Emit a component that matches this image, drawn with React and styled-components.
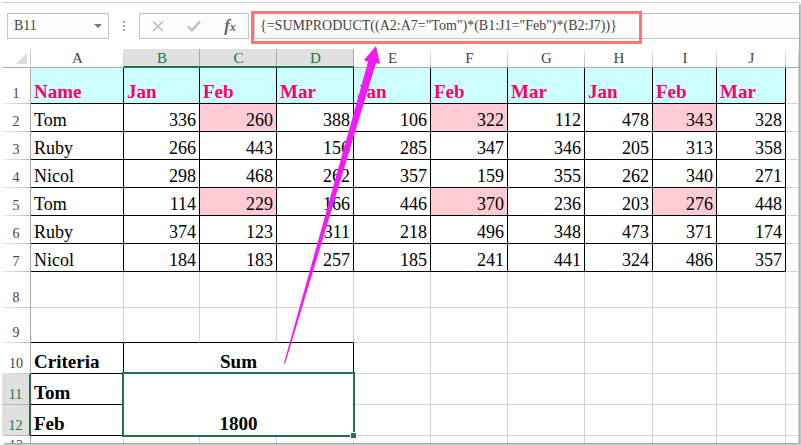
import React from 'react';
import styled, { createGlobalStyle } from 'styled-components';

const GlobalStyle = createGlobalStyle`
  * {
    box-sizing: border-box;
  }

  body {
    margin: 0;
    background-color: white;
    font-family: 'Liberation Serif', 'Times New Roman', serif;
  }
`;

const Page = styled.div`
  height: 100vh;
  padding: 2px;
  display: flex;
  overflow: hidden;
`;

const Window = styled.main`
  position: relative;
  flex: 1;
  min-width: 0;
  display: flex;
  flex-direction: column;
  border-top: 1px solid #d0d0d0;
  background-color: white;
  box-shadow: 2px 2px 2px #a8a8a8;
`;

const FormulaBar = styled.div`
  display: flex;
  padding: 10px 0 10px 5px;
`;

const NameBox = styled.div`
  display: flex;
  width: 102px;
  height: 26px;
  border: 1px solid #c6c6c6;
  background-color: #fdfdfd;
`;

const NameInput = styled.input`
  flex: 1;
  min-width: 0;
  padding: 0 6px;
  border: none;
  outline: none;
  background: transparent;
  color: #444;
  font-family: inherit;
  font-size: 14px;
`;

const IconButton = styled.button`
  display: flex;
  align-items: center;
  justify-content: center;
  flex: ${props => props.$narrow ? '0 0 20px' : '1'};
  padding: 0;
  border: none;
  background: transparent;
  color: #666;
  font-family: inherit;
  cursor: pointer;
`;

const Divider = styled.div`
  width: 30px;
  display: flex;
  flex-direction: column;
  align-items: center;
  justify-content: center;
  gap: 2px;
`;

const Dot = styled.span`
  width: 2px;
  height: 2px;
  background-color: #a0a0a0;
`;

const Actions = styled.div`
  display: flex;
  width: 110px;
  height: 26px;
  margin-right: 5px;
  border: 1px solid #c6c6c6;
  background-color: #fdfdfd;
`;

const FormulaBox = styled.div`
  position: relative;
  flex: 1;
  display: flex;
  border: 1px solid #c6c6c6;
  border-right: none;
  background-color: #fdfdfd;
`;

const FormulaInput = styled.input`
  flex: 1;
  min-width: 0;
  padding: 0 5px;
  border: none;
  outline: none;
  background: transparent;
  color: #444;
  font-family: inherit;
  font-size: 14px;
`;

const Highlight = styled.div`
  position: absolute;
  top: -3px;
  left: -4px;
  width: 391px;
  height: 33px;
  border: 3px solid #fb7575;
  pointer-events: none;
`;

const Sheet = styled.div`
  flex: 1;
  min-height: 0;
  overflow: hidden;
`;

const Grid = styled.table`
  width: 100%;
  table-layout: fixed;
  border-collapse: separate;
  border-spacing: 0;
`;

const Col = styled.col`
  width: ${props => props.$width ? `${props.$width}px` : 'auto'};
`;

const Row = styled.tr`
  height: ${props => props.$height}px;
`;

const Corner = styled.td`
  padding: 0 3px 3px 0;
  border-bottom: 1px solid #ababab;
  border-right: 1px solid #d0d0d0;
  vertical-align: bottom;

  svg {
    display: block;
    margin-left: auto;
  }
`;

const ColumnHead = styled.th`
  padding: 1px 0 0;
  border-bottom: 1px solid ${props => props.$selected ? '#217346' : '#ababab'};
  box-shadow: ${props => props.$selected ? 'inset 0 -1px 0 #217346' : 'none'};
  background: linear-gradient(${props => props.$selected ? '#ababab, #ababab' : '#eee, #bbb'})
    right / 1px 100% no-repeat ${props => props.$selected ? '#e0e0e0' : 'white'};
  color: ${props => props.$selected ? '#217346' : '#444'};
  font-size: 15px;
  font-weight: normal;
  line-height: 17px;
`;

const RowHead = styled.th`
  padding: 0 0 1px;
  border-right: ${props => props.$selected ? '2px solid #217346' : '1px solid #ababab'};
  background: linear-gradient(to right, ${props => props.$selected ? '#c6c6c6, #ababab' : '#eee, #bbb'})
    bottom / 100% 1px no-repeat ${props => props.$selected ? '#e0e0e0' : 'white'};
  color: ${props => props.$selected ? '#217346' : '#444'};
  font-size: 14px;
  font-weight: normal;
  line-height: 18px;
  vertical-align: bottom;
`;

const Cell = styled.td`
  padding: 0 3px 1px;
  border-right: 1px solid ${props => props.$boxed ? 'black' : '#d4d4d4'};
  border-bottom: 1px solid ${props => props.$bottom || props.$boxed ? 'black' : '#d4d4d4'};
  background-color: ${props => props.$fill || 'white'};
  color: ${props => props.$color || 'black'};
  font-size: ${props => props.$bold ? 19 : 18}px;
  font-weight: ${props => props.$bold ? 'bold' : 'normal'};
  line-height: 20px;
  text-align: ${props => props.$align || 'left'};
  vertical-align: bottom;
`;

const SelectedCell = styled(Cell)`
  position: relative;
`;

const Selection = styled.div`
  position: absolute;
  inset: -2px;
  border: 2px solid #217346;
`;

const FillHandle = styled.span`
  position: absolute;
  right: -4px;
  bottom: -4px;
  width: 7px;
  height: 7px;
  border: 1px solid white;
  background-color: #217346;
`;

const Arrow = styled.svg`
  position: absolute;
  top: 43px;
  left: 281px;
  pointer-events: none;
`;

const FxLabel = styled.span`
  font-size: 17px;
  font-style: italic;
  font-weight: bold;
  line-height: 18px;

  small {
    font-size: 12px;
  }
`;

const columns = [
  { letter: 'A', width: 93 },
  { letter: 'B', width: 76, selected: true },
  { letter: 'C', width: 77, selected: true },
  { letter: 'D', width: 77, selected: true },
  { letter: 'E', width: 77 },
  { letter: 'F', width: 77 },
  { letter: 'G', width: 77 },
  { letter: 'H', width: 68 },
  { letter: 'I', width: 64 },
  { letter: 'J', width: 69 },
];

const header = ['Name', 'Jan', 'Feb', 'Mar', 'Jan', 'Feb', 'Mar', 'Jan', 'Feb', 'Mar'];

const people = [
  { name: 'Tom', values: [336, 260, 388, 106, 322, 112, 478, 343, 328] },
  { name: 'Ruby', values: [266, 443, 156, 285, 347, 346, 205, 313, 358] },
  { name: 'Nicol', values: [298, 468, 262, 357, 159, 355, 262, 340, 271] },
  { name: 'Tom', values: [114, 229, 166, 446, 370, 236, 203, 276, 448] },
  { name: 'Ruby', values: [374, 123, 311, 218, 496, 348, 473, 371, 174] },
  { name: 'Nicol', values: [184, 183, 257, 185, 241, 441, 324, 486, 357] },
];

const isMatch = (name, index) => name === 'Tom' && header[index + 1] === 'Feb';

const emptyCells = (count) => Array.from({ length: count }, (_, i) => <Cell key={i} />);

const Toolbar = () => {
  return (
    <FormulaBar>
      <NameBox>
        <NameInput aria-label="Name box" defaultValue="B11" />
        <IconButton $narrow aria-label="Show names">
          <svg width="8" height="4" viewBox="0 0 8 4">
            <path d="M0 0H8L4 4Z" fill="#777" />
          </svg>
        </IconButton>
      </NameBox>
      <Divider>
        <Dot />
        <Dot />
        <Dot />
      </Divider>
      <Actions>
        <IconButton aria-label="Cancel">
          <svg width="12" height="12" viewBox="0 0 12 12">
            <path d="M1 1.5L11 11M11 1.5L1 11" fill="none" stroke="#bdbdbd" strokeWidth="1.7" />
          </svg>
        </IconButton>
        <IconButton aria-label="Enter">
          <svg width="14" height="12" viewBox="0 0 14 12">
            <path d="M1 6.5L5 10.3L13 1.2" fill="none" stroke="#bdbdbd" strokeWidth="2.4" />
          </svg>
        </IconButton>
        <IconButton aria-label="Insert function">
          <FxLabel>f<small>x</small></FxLabel>
        </IconButton>
      </Actions>
      <FormulaBox>
        <FormulaInput
          aria-label="Formula"
          defaultValue={'{=SUMPRODUCT((A2:A7="Tom")*(B1:J1="Feb")*(B2:J7))}'}
        />
        <Highlight />
      </FormulaBox>
    </FormulaBar>
  );
};

const App = () => {
  return (
    <Page>
      <GlobalStyle />
      <Window>
        <Toolbar />
        <Sheet>
          <Grid>
            <colgroup>
              <Col $width={29} />
              {columns.map(column => <Col key={column.letter} $width={column.width} />)}
              <Col />
            </colgroup>
            <thead>
              <Row $height={19}>
                <Corner>
                  <svg width="11" height="11" viewBox="0 0 11 11">
                    <path d="M11 0V11H0Z" fill="#dcdcdc" />
                  </svg>
                </Corner>
                {columns.map(column => (
                  <ColumnHead key={column.letter} scope="col" $selected={column.selected}>
                    {column.letter}
                  </ColumnHead>
                ))}
                <ColumnHead />
              </Row>
            </thead>
            <tbody>
              <Row $height={36}>
                <RowHead scope="row">1</RowHead>
                {header.map((title, index) => (
                  <Cell key={index} $boxed $bold $fill="#ccffff" $color="#ff0066">{title}</Cell>
                ))}
                <Cell />
              </Row>
              {people.map((person, index) => (
                <Row key={index} $height={28}>
                  <RowHead scope="row">{index + 2}</RowHead>
                  <Cell $boxed>{person.name}</Cell>
                  {person.values.map((value, i) => (
                    <Cell key={i} $boxed $align="right" $fill={isMatch(person.name, i) ? '#ffccd6' : undefined}>
                      {value}
                    </Cell>
                  ))}
                  <Cell />
                </Row>
              ))}
              <Row $height={36}>
                <RowHead scope="row">8</RowHead>
                {emptyCells(11)}
              </Row>
              <Row $height={35}>
                <RowHead scope="row">9</RowHead>
                <Cell $bottom />
                <Cell $bottom />
                <Cell $bottom />
                <Cell $bottom />
                {emptyCells(7)}
              </Row>
              <Row $height={31}>
                <RowHead scope="row">10</RowHead>
                <Cell $boxed $bold>Criteria</Cell>
                <Cell $boxed $bold $align="center" colSpan={3}>Sum</Cell>
                {emptyCells(7)}
              </Row>
              <Row $height={31}>
                <RowHead scope="row" $selected>11</RowHead>
                <Cell $boxed $bold>Tom</Cell>
                <SelectedCell $boxed $bold $align="center" colSpan={3} rowSpan={2}>
                  1800
                  <Selection>
                    <FillHandle />
                  </Selection>
                </SelectedCell>
                {emptyCells(7)}
              </Row>
              <Row $height={31}>
                <RowHead scope="row" $selected>12</RowHead>
                <Cell $boxed $bold>Feb</Cell>
                {emptyCells(7)}
              </Row>
              <Row $height={20}>
                <RowHead scope="row">13</RowHead>
                {emptyCells(11)}
              </Row>
            </tbody>
          </Grid>
        </Sheet>
        <Arrow width="98" height="319" viewBox="0 0 98 319">
          <path d="M1 317L85 16L81 14L93 0L97 18L93 17L2 318Z" fill="#f31bf3" />
        </Arrow>
      </Window>
    </Page>
  );
};

export default App;
